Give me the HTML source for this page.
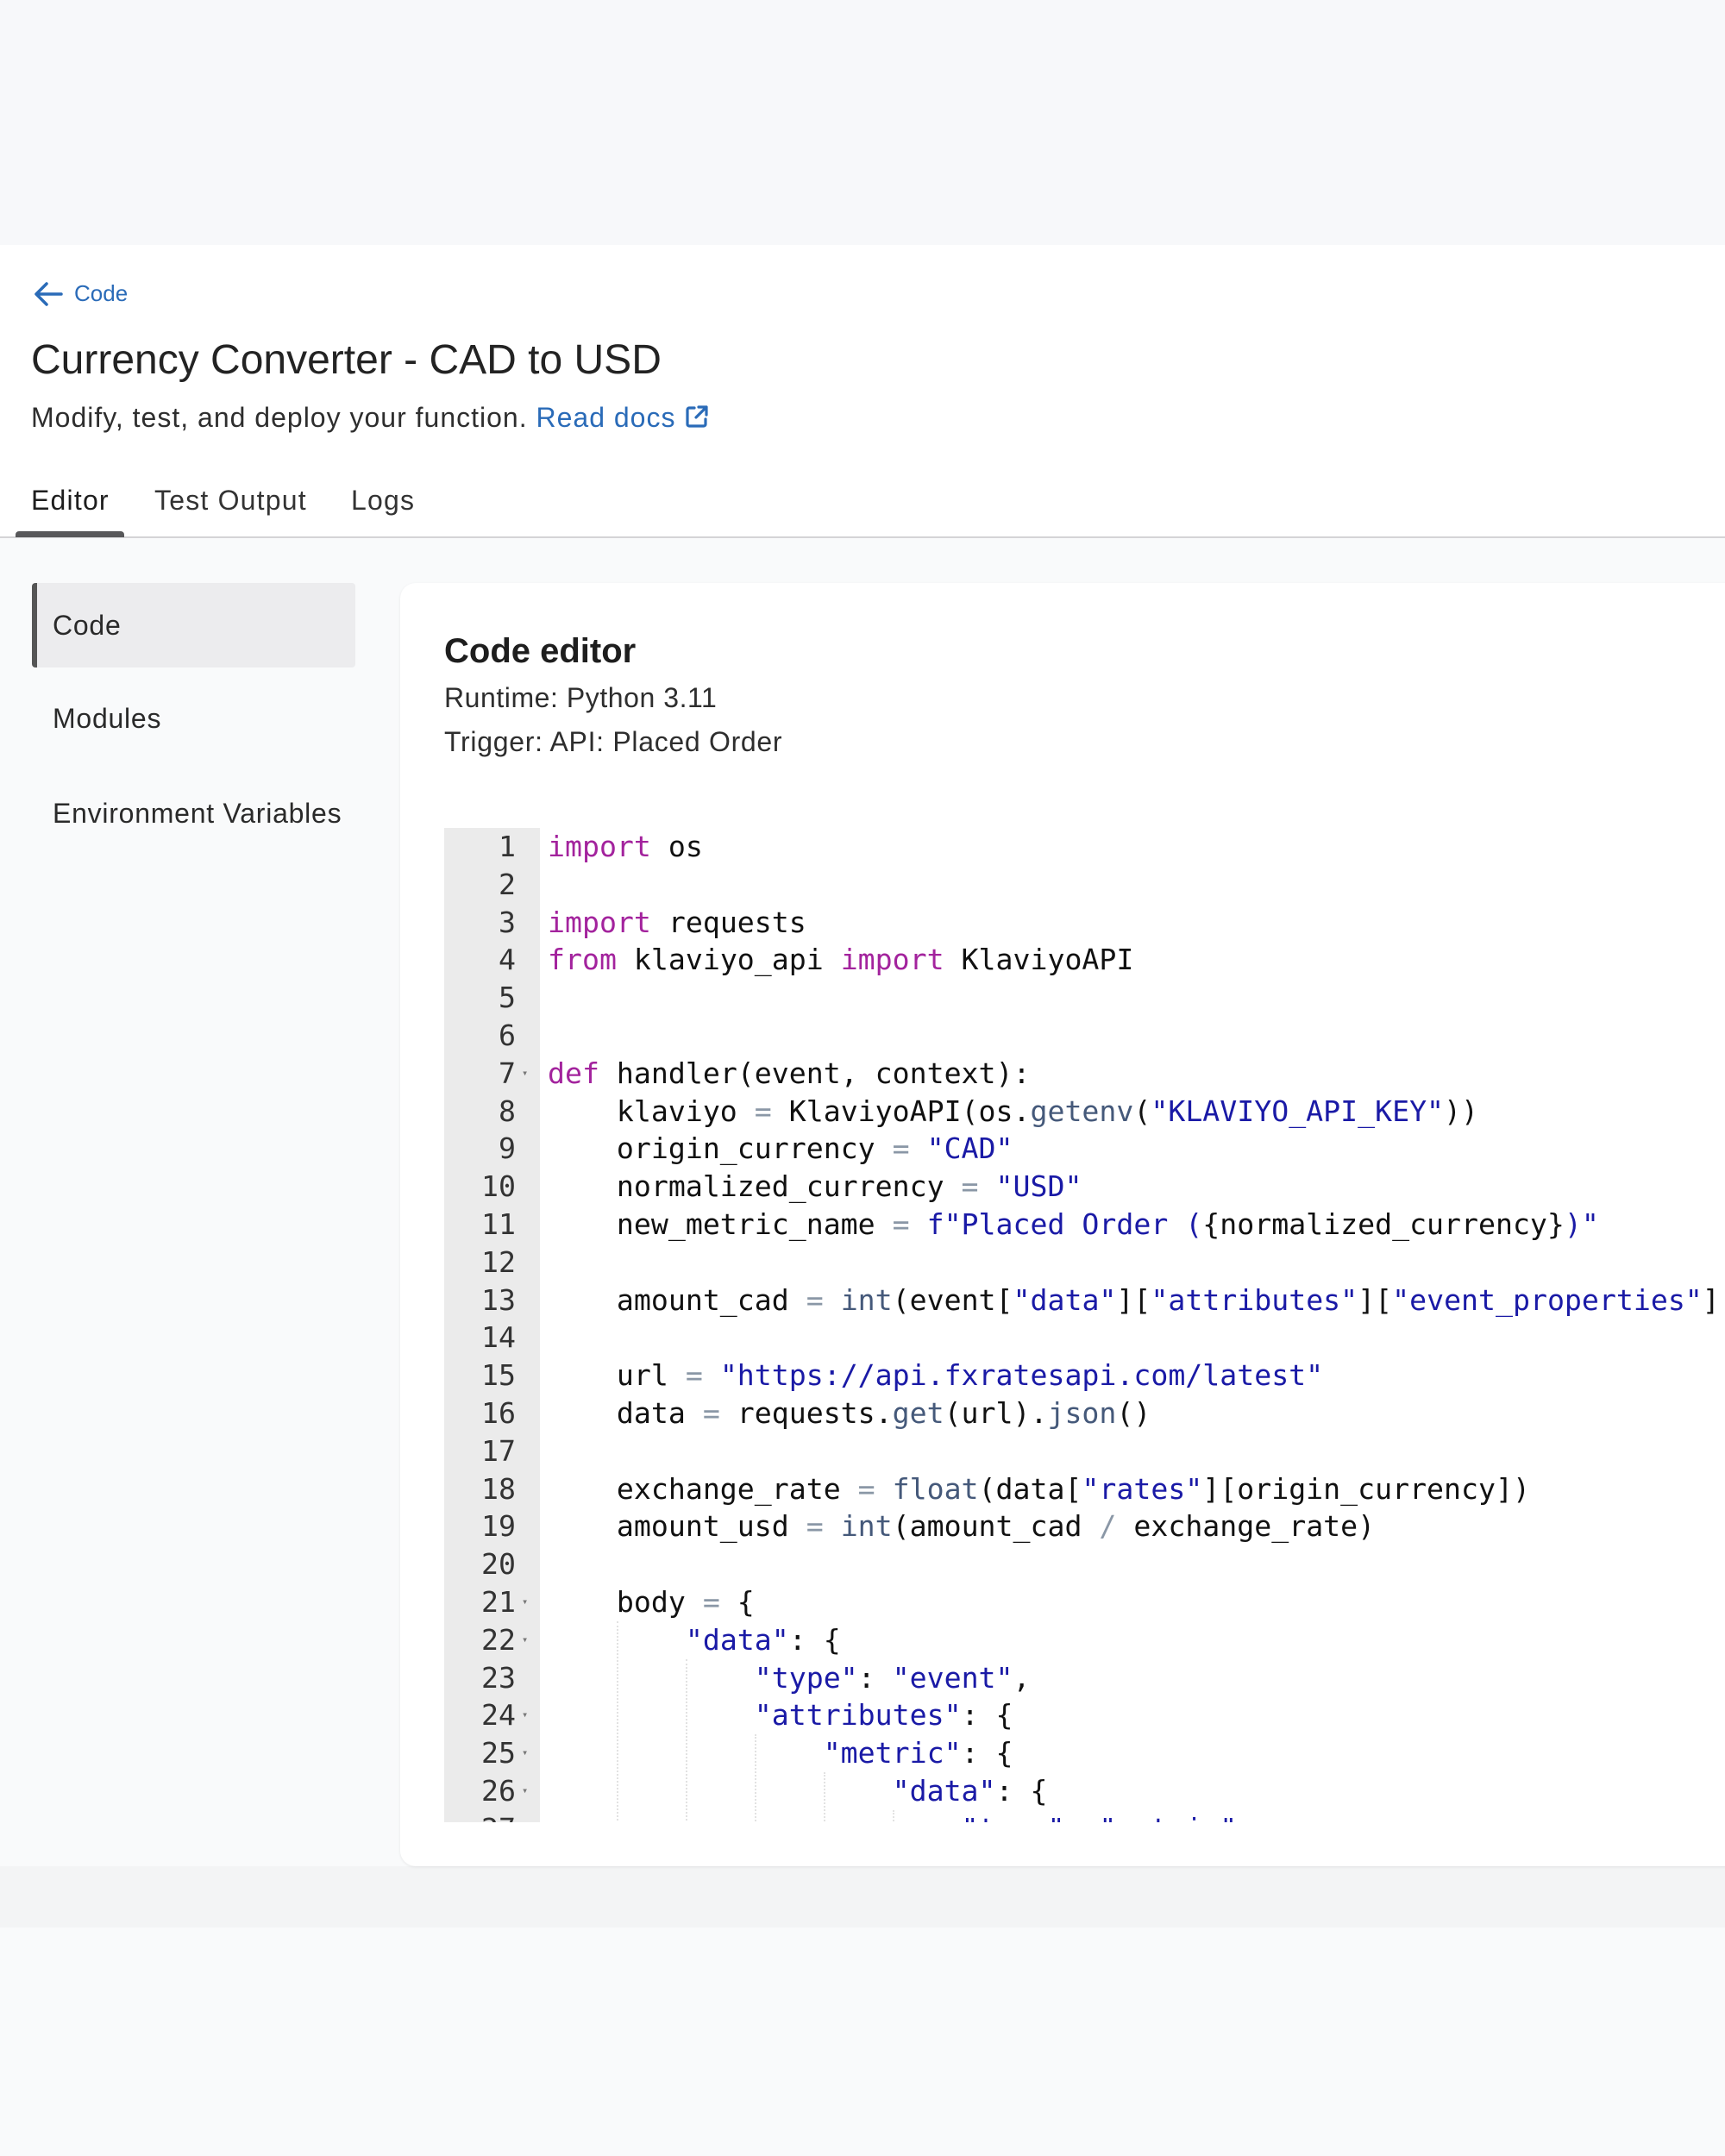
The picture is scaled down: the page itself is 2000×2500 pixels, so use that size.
<!DOCTYPE html>
<html><head><meta charset="utf-8"><style>
*{margin:0;padding:0;box-sizing:border-box}
body{width:2000px;height:2500px;background:#f9fafb;font-family:"Liberation Sans",Arial,sans-serif;color:#222;position:relative;overflow:hidden}
.top{position:absolute;left:0;top:0;width:2000px;height:284px;background:#f7f8fa}
.white{position:absolute;left:0;top:284px;width:2000px;height:338px;background:#fff}
.line{position:absolute;left:0;top:622px;width:2000px;height:2px;background:#d4d4d6}
.band{position:absolute;left:0;top:2164px;width:2000px;height:71px;background:#f3f4f5}
.abs{position:absolute;white-space:nowrap}
.crumb{left:38px;top:325px;color:#2a6bb8;font-size:26px;display:flex;align-items:center}
.title{left:36px;top:390px;font-size:48px;color:#232323}
.sub{left:36px;top:466px;font-size:32px;color:#2e2e2e;letter-spacing:1px}
.sub a{color:#2a6bb8;text-decoration:none}
.tab{top:562px;font-size:32px;color:#333;letter-spacing:1.2px}
.uline{left:18px;top:616px;width:126px;height:7px;background:#58585a;border-radius:4px 4px 0 0}
.side{left:37px;top:676px;width:375px;height:98px;background:#ececee;border-left:6px solid #555;border-radius:4px}
.sl{font-size:32px;color:#2a2a2a;letter-spacing:0.75px}
.card{position:absolute;left:464px;top:676px;width:1600px;height:1488px;background:#fff;border-radius:18px;box-shadow:0 1px 3px rgba(0,0,0,.08)}
.gut{position:absolute;left:515px;top:960px;width:111px;height:1153px;background:#ebebeb}
.code{position:absolute;left:515px;top:960px;width:1485px;height:1153px;overflow:hidden;font-family:"DejaVu Sans Mono","Liberation Mono",monospace;font-size:33.2px}
.ln{position:absolute;left:0;width:83px;text-align:right;color:#333;height:43.8px;line-height:43.8px}
.fd{position:absolute;left:90px;font-size:12px;color:#777;line-height:43.8px}
.tx{position:absolute;left:120px;white-space:pre;line-height:43.8px;color:#111}
.k{color:#a3239d}.s{color:#1a1aa6}.f{color:#45597a}.o{color:#8a97a6}
.g{position:absolute;width:0;border-left:2px dotted #e2e2e2}
</style></head><body>
<div class="top"></div><div class="white"></div><div class="line"></div><div class="band"></div>
<div class="abs crumb"><svg width="36" height="30" viewBox="0 0 36 30"><path d="M33 15H5M16 3L4 15l12 12" fill="none" stroke="#2a6bb8" stroke-width="3.5" stroke-linecap="round" stroke-linejoin="round"/></svg><span style="margin-left:12px">Code</span></div>
<div class="abs title">Currency Converter - CAD to USD</div>
<div class="abs sub">Modify, test, and deploy your function. <a>Read docs</a> <svg width="30" height="30" viewBox="0 0 30 30" style="vertical-align:-3px"><path d="M12 5H6a2 2 0 0 0-2 2v17a2 2 0 0 0 2 2h17a2 2 0 0 0 2-2v-6M17 4h9v9M26 4L14 16" fill="none" stroke="#2a6bb8" stroke-width="3.2" stroke-linecap="round" stroke-linejoin="round"/></svg></div>
<div class="abs tab" style="left:36px;color:#1e1e1e">Editor</div>
<div class="abs tab" style="left:179px">Test Output</div>
<div class="abs tab" style="left:407px">Logs</div>
<div class="abs uline"></div>
<div class="abs side"></div>
<div class="abs sl" style="left:61px;top:707px">Code</div>
<div class="abs sl" style="left:61px;top:815px">Modules</div>
<div class="abs sl" style="left:61px;top:925px">Environment Variables</div>
<div class="card"></div>
<div class="abs" style="left:515px;top:733px;font-size:40px;font-weight:bold;color:#1e1e1e">Code editor</div>
<div class="abs" style="left:515px;top:791px;font-size:32px;color:#2e2e2e;letter-spacing:0.55px">Runtime: Python 3.11</div>
<div class="abs" style="left:515px;top:842px;font-size:32px;color:#2e2e2e;letter-spacing:0.7px">Trigger: API: Placed Order</div>
<div class="gut"></div>
<div class="code" id="c"></div>
<script>
var L=[
'<span class="k">import</span> os','','<span class="k">import</span> requests',
'<span class="k">from</span> klaviyo_api <span class="k">import</span> KlaviyoAPI','','',
'<span class="k">def</span> handler(event, context):',
'    klaviyo <span class="o">=</span> KlaviyoAPI(os.<span class="f">getenv</span>(<span class="s">"KLAVIYO_API_KEY"</span>))',
'    origin_currency <span class="o">=</span> <span class="s">"CAD"</span>',
'    normalized_currency <span class="o">=</span> <span class="s">"USD"</span>',
'    new_metric_name <span class="o">=</span> <span class="s">f"Placed Order (</span>{normalized_currency}<span class="s">)"</span>',
'',
'    amount_cad <span class="o">=</span> <span class="f">int</span>(event[<span class="s">"data"</span>][<span class="s">"attributes"</span>][<span class="s">"event_properties"</span>][<span class="s">"$value"</span>])',
'',
'    url <span class="o">=</span> <span class="s">"https://api.fxratesapi.com/latest"</span>',
'    data <span class="o">=</span> requests.<span class="f">get</span>(url).<span class="f">json</span>()',
'',
'    exchange_rate <span class="o">=</span> <span class="f">float</span>(data[<span class="s">"rates"</span>][origin_currency])',
'    amount_usd <span class="o">=</span> <span class="f">int</span>(amount_cad <span class="o">/</span> exchange_rate)',
'',
'    body <span class="o">=</span> {',
'        <span class="s">"data"</span>: {',
'            <span class="s">"type"</span>: <span class="s">"event"</span>,',
'            <span class="s">"attributes"</span>: {',
'                <span class="s">"metric"</span>: {',
'                    <span class="s">"data"</span>: {',
'                        <span class="s">"type"</span>: <span class="s">"metric"</span>,'
];
var folds={7:1,21:1,22:1,24:1,25:1,26:1};
var h='',lh=43.8,cw=19.99;
for(var i=0;i<L.length;i++){var t=i*lh;
h+='<div class="ln" style="top:'+t+'px">'+(i+1)+'</div>';
if(folds[i+1])h+='<div class="fd" style="top:'+t+'px">&#9662;</div>';
h+='<div class="tx" style="top:'+t+'px">'+L[i]+'</div>';}
var lvls=[[4,21,27],[8,22,27],[12,24,27],[16,25,27],[20,26,27]];
for(var j=0;j<lvls.length;j++){var x=120+lvls[j][0]*cw;h+='<div class="g" style="left:'+x+'px;top:'+(lvls[j][1]*lh)+'px;height:'+((lvls[j][2]-lvls[j][1])*lh)+'px"></div>';}
document.getElementById('c').innerHTML=h;
</script>
</body></html>
